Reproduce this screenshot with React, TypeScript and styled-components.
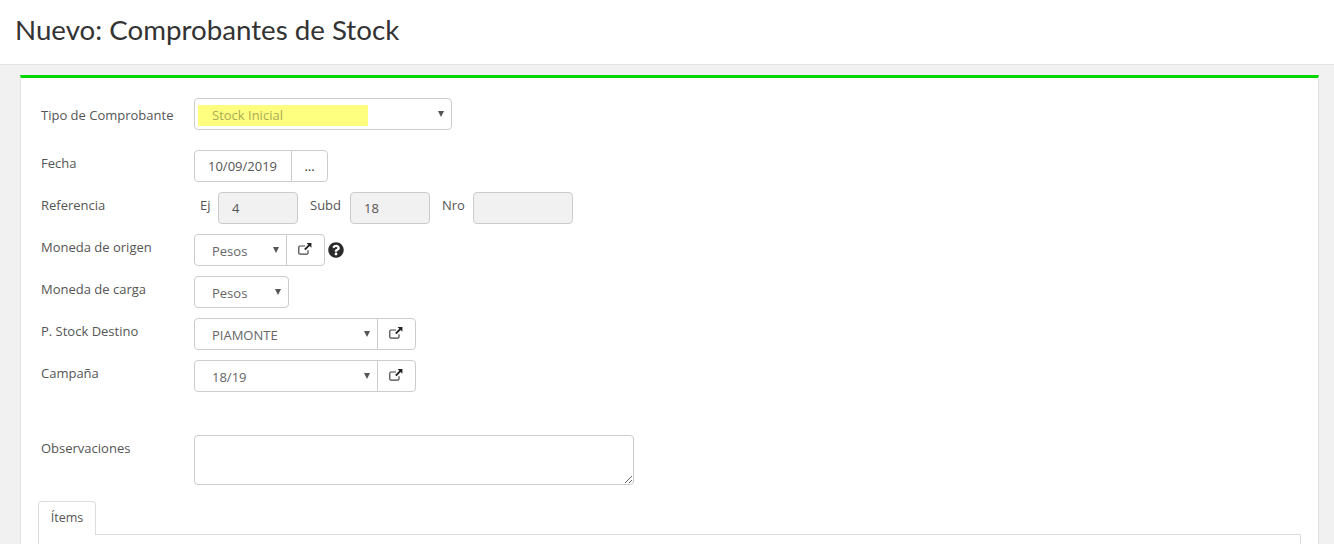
import React, { ReactElement } from "react";
import styled, { createGlobalStyle } from "styled-components";
import { FaQuestionCircle } from "react-icons/fa";

const GlobalStyle = createGlobalStyle`
  html, body {
    margin: 0;
    padding: 0;
    height: 100%;
    overflow: hidden;
    background: #f1f1f1;
  }
  body {
    font-family: "Open Sans", "Liberation Sans", sans-serif;
    font-size: 13px;
    color: #555;
  }
`;

const Page = styled.div`
  height: 544px;
  overflow: hidden;
`;

const Header = styled.header`
  height: 58px;
  background: #fff;
  border-bottom: 1px solid #e5e5e5;
  display: flex;
  align-items: center;
  padding: 0 0 6px 15px;
`;

const Title = styled.h1`
  margin: 0;
  font-family: Lato, "Liberation Sans", sans-serif;
  font-weight: 400;
  font-size: 27.7px;
  color: #333;
`;

const Card = styled.main`
  margin: 10px 15px 0 20px;
  background: #fff;
  border-top: 3px solid #00d600;
  border-left: 1px solid #e2e2e2;
  border-right: 1px solid #e2e2e2;
  height: 480px;
  padding: 20px 17px 0 17px;
  box-sizing: border-box;
`;

const Row = styled.div<{ $gap?: number }>`
  display: flex;
  align-items: flex-start;
  height: 32px;
  margin-bottom: ${(p) => p.$gap ?? 10}px;
`;

const Label = styled.label<{ $top?: number }>`
  width: 156px;
  padding-left: 3px;
  box-sizing: border-box;
  flex-shrink: 0;
  padding-top: ${(p) => p.$top ?? 4}px;
  line-height: 18px;
  color: #555;
`;

const Select = styled.div<{ $w: number; $joined?: boolean }>`
  width: ${(p) => p.$w}px;
  height: 32px;
  box-sizing: border-box;
  border: 1px solid #ccc;
  border-radius: ${(p) => (p.$joined ? "4px 0 0 4px" : "4px")};
  background: #fff;
  display: flex;
  align-items: center;
  position: relative;
  padding-left: 17px;
  padding-top: 2px;
  color: #666;
`;

const Caret = styled.span`
  position: absolute;
  right: 7px;
  top: 12px;
  width: 0;
  height: 0;
  border-left: 3px solid transparent;
  border-right: 3px solid transparent;
  border-top: 6px solid #555;
`;

const Highlight = styled.span`
  margin-left: -14px;
  width: 170px;
  height: 21px;
  box-sizing: border-box;
  padding-left: 14px;
  background: #ffff7f;
  color: #aaaa55;
  line-height: 21px;
`;

const TextBox = styled.div<{ $w: number; $disabled?: boolean; $joined?: boolean }>`
  width: ${(p) => p.$w}px;
  height: 32px;
  box-sizing: border-box;
  border: 1px solid #ccc;
  border-radius: ${(p) => (p.$joined ? "4px 0 0 4px" : "4px")};
  background: ${(p) => (p.$disabled ? "#f1f1f1" : "#fff")};
  padding: 0 0 0 13px;
  display: flex;
  align-items: center;
  color: #555;
`;

const AddonButton = styled.button<{ $w: number }>`
  width: ${(p) => p.$w}px;
  height: 32px;
  box-sizing: border-box;
  margin-left: -1px;
  border: 1px solid #ccc;
  border-radius: 0 4px 4px 0;
  background: #fff;
  display: flex;
  align-items: center;
  justify-content: center;
  padding: 0;
  font: inherit;
  color: #333;
`;

const IconButton = styled(AddonButton)`
  padding-bottom: 2px;
`;

const RefLabel = styled.span<{ $w: number; $pad: number }>`
  width: ${(p) => p.$w}px;
  padding-left: ${(p) => p.$pad}px;
  padding-top: 4px;
  box-sizing: border-box;
  line-height: 18px;
  color: #555;
`;

const HelpIcon = styled(FaQuestionCircle)`
  width: 16px;
  height: 16px;
  margin: 8px 0 0 3px;
  color: #2b2b2b;
`;

const NotesRow = styled.div`
  display: flex;
  align-items: flex-start;
  margin-top: 43px;
  height: 50px;
`;

const Notes = styled.textarea`
  width: 440px;
  height: 50px;
  box-sizing: border-box;
  border: 1px solid #ccc;
  border-radius: 4px;
  background: #fff;
  margin: 0;
  padding: 6px 12px;
  font: inherit;
  outline: none;
`;

const Tabs = styled.div`
  margin-top: 16px;
  border-bottom: 1px solid #ddd;
  height: 33px;
`;

const Tab = styled.div`
  width: 58px;
  height: 34px;
  box-sizing: border-box;
  background: #fff;
  border: 1px solid #ddd;
  border-bottom: none;
  border-radius: 4px 4px 0 0;
  font-size: 12.5px;
  color: #555;
  display: flex;
  align-items: center;
  justify-content: center;
  padding-bottom: 3px;
`;

const TabBody = styled.div`
  height: 20px;
  border-left: 1px solid #ddd;
  border-right: 1px solid #ddd;
`;

const LinkSvg = styled.svg`
  margin-left: -1px;
`;

function LinkIcon(): ReactElement {
  return (
    <LinkSvg width="14" height="12" viewBox="0 0 14 12" fill="none">
      <path d="M10 7.2V10a1.2 1.2 0 0 1-1.2 1.2H2A1.2 1.2 0 0 1 .8 10V4.2A1.2 1.2 0 0 1 2 3h5" stroke="#444" strokeWidth="1.2" />
      <path d="M8.6 0H13.4V4.8L11.7 3.1 7.5 7.3 6.1 5.9 10.3 1.7Z" fill="#222" />
    </LinkSvg>
  );
}

export default function App(): ReactElement {
  return (
    <Page>
      <GlobalStyle />
      <Header>
        <Title>Nuevo: Comprobantes de Stock</Title>
      </Header>
      <Card>
        <Row $gap={20}>
          <Label $top={8}>Tipo de Comprobante</Label>
          <Select $w={258}>
            <Highlight>Stock Inicial</Highlight>
            <Caret />
          </Select>
        </Row>
        <Row>
          <Label>Fecha</Label>
          <TextBox $w={98} $joined>10/09/2019</TextBox>
          <AddonButton $w={37}>...</AddonButton>
        </Row>
        <Row>
          <Label>Referencia</Label>
          <RefLabel $w={24} $pad={6}>Ej</RefLabel>
          <TextBox $w={80} $disabled>4</TextBox>
          <RefLabel $w={52} $pad={12}>Subd</RefLabel>
          <TextBox $w={80} $disabled>18</TextBox>
          <RefLabel $w={43} $pad={12}>Nro</RefLabel>
          <TextBox $w={100} $disabled />
        </Row>
        <Row>
          <Label>Moneda de origen</Label>
          <Select $w={93} $joined>
            Pesos
            <Caret />
          </Select>
          <IconButton $w={39}><LinkIcon /></IconButton>
          <HelpIcon />
        </Row>
        <Row>
          <Label>Moneda de carga</Label>
          <Select $w={95}>
            Pesos
            <Caret />
          </Select>
        </Row>
        <Row>
          <Label>P. Stock Destino</Label>
          <Select $w={184} $joined>
            PIAMONTE
            <Caret />
          </Select>
          <IconButton $w={39}><LinkIcon /></IconButton>
        </Row>
        <Row>
          <Label>Campaña</Label>
          <Select $w={184} $joined>
            18/19
            <Caret />
          </Select>
          <IconButton $w={39}><LinkIcon /></IconButton>
        </Row>
        <NotesRow>
          <Label>Observaciones</Label>
          <Notes />
        </NotesRow>
        <Tabs>
          <Tab>Ítems</Tab>
        </Tabs>
        <TabBody />
      </Card>
    </Page>
  );
}
